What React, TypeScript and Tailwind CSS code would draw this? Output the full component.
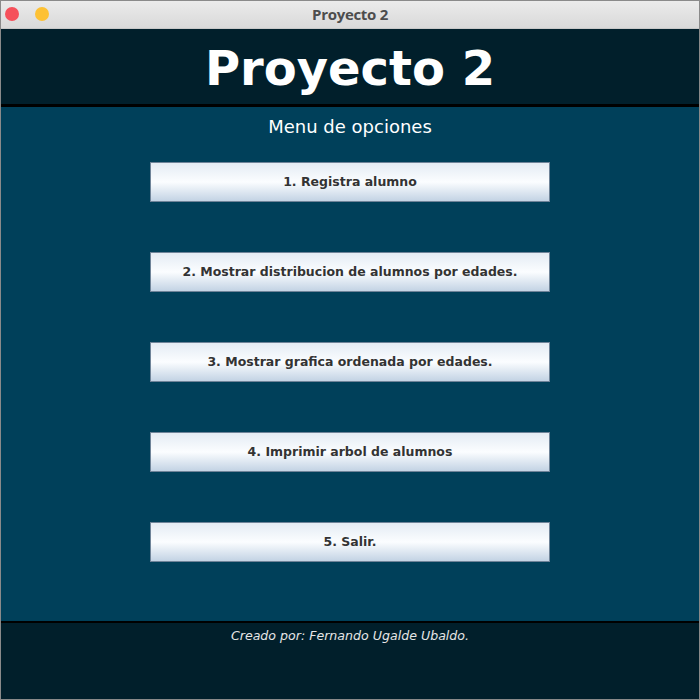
import React from "react";

const items = [
  "1. Registra alumno",
  "2. Mostrar distribucion de alumnos por edades.",
  "3. Mostrar grafica ordenada por edades.",
  "4. Imprimir arbol de alumnos",
  "5. Salir.",
];

export default function App() {
  return (
    <div className="w-[700px] h-[700px] flex flex-col border border-[#8a8a8a] bg-[#011f2b] overflow-hidden" style={{ fontFamily: '"DejaVu Sans", sans-serif' }}>
      <div className="relative h-[28px] shrink-0 flex items-center justify-center bg-gradient-to-b from-[#ebebeb] to-[#d9d9d9] border-b border-[#c8c8c8]">
        <div className="absolute left-[4px] top-[6px] w-[14px] h-[14px] rounded-full bg-[#f5505a]" />
        <div className="absolute left-[34px] top-[6px] w-[14px] h-[14px] rounded-full bg-[#fdc134]" />
        <span className="text-[15px] font-bold text-[#4d4d4d] tracking-[-0.3px]" style={{ fontFamily: '"Open Sans", sans-serif' }}>Proyecto 2</span>
      </div>
      <div className="h-[75px] shrink-0 flex items-center justify-center bg-[#011f2b]">
        <span className="text-[48px] font-bold text-white leading-none mt-[2px]">Proyecto 2</span>
      </div>
      <div className="h-[3px] shrink-0 bg-black" />
      <div className="h-[514px] shrink-0 bg-[#00405a] flex flex-col items-center">
        <div className="mt-[9px] text-[18px] text-white leading-[21px]">Menu de opciones</div>
        <div className="mt-[25px] flex flex-col gap-[50px]">
          {items.map((t) => (
            <div
              key={t}
              className="w-[400px] h-[40px] flex items-center justify-center border border-[#6f8499] bg-gradient-to-b from-[#e4ecf4] via-[#fbfdff] to-[#c3d3e4] text-[12.5px] font-bold text-[#333333] pt-[1px]"
            >
              {t}
            </div>
          ))}
        </div>
      </div>
      <div className="h-[2px] shrink-0 bg-black" />
      <div className="flex-1 bg-[#011f2b] flex justify-center">
        <span className="mt-[4px] text-[12.6px] italic text-[#e6e6e6]">Creado por: Fernando Ugalde Ubaldo.</span>
      </div>
    </div>
  );
}
